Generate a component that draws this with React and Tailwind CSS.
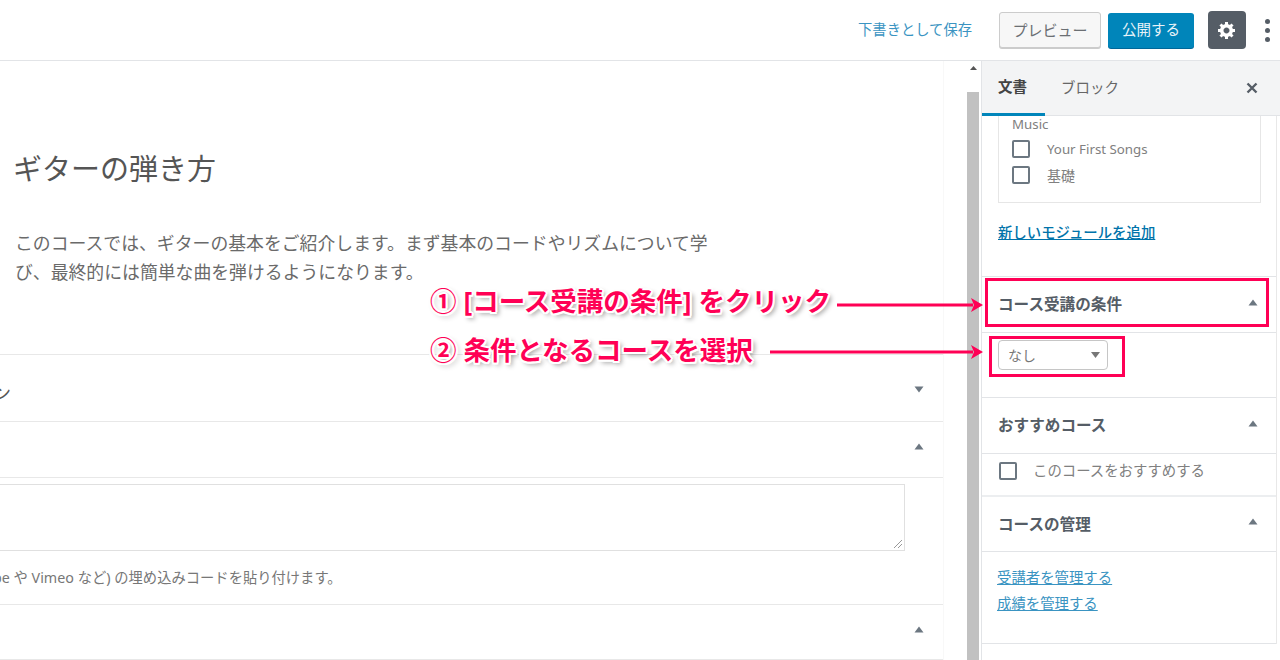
const FONT = "font-['Noto_Sans','Noto_Sans_CJK_JP',sans-serif]";

function Caret({ up = true, className = "" }) {
  return (
    <svg width="10" height="7" viewBox="0 0 10 7" className={className}>
      <polygon points={up ? "5,0.5 9.5,6.5 0.5,6.5" : "0.5,0.5 9.5,0.5 5,6.5"} fill="#6c7781" />
    </svg>
  );
}

function Check() {
  return <span className="w-[18px] h-[18px] shrink-0 border-2 border-[#6c7781] rounded-[2px] bg-white" />;
}

function Gear() {
  return (
    <svg width="20" height="20" viewBox="0 0 20 20" fill="#fff">
      <path d="M18 12h-2.18c-.17.7-.44 1.35-.81 1.93l1.54 1.54-2.1 2.1-1.54-1.54c-.58.36-1.23.63-1.91.79V19H8v-2.18c-.68-.16-1.33-.43-1.91-.79l-1.54 1.54-2.12-2.12 1.54-1.54c-.36-.58-.63-1.23-.79-1.91H1V9.03h2.17c.16-.7.44-1.35.8-1.94L2.43 5.55l2.1-2.1 1.54 1.54c.58-.37 1.24-.64 1.93-.81V2h3v2.18c.68.16 1.33.43 1.91.79l1.54-1.54 2.12 2.12-1.54 1.54c.36.59.64 1.24.8 1.94H18V12zm-8.5 1.5c1.66 0 3-1.34 3-3s-1.34-3-3-3-3 1.34-3 3 1.34 3 3 3z" />
    </svg>
  );
}

function TopBar() {
  return (
    <div className="h-[61px] shrink-0 border-b border-[#e2e4e7] flex items-center justify-end">
      <a className="text-[14.3px] text-[#3a94c2] mr-[27px]">下書きとして保存</a>
      <button className="w-[102px] h-[36px] mr-[7px] text-[15px] text-[#6b6f73] bg-[#f7f7f7] border border-[#ccc] rounded-[3px] shadow-[0_1px_0_#ccc]">
        プレビュー
      </button>
      <button className="w-[86px] h-[35px] mr-[14px] text-[14.5px] text-[#e8f3f8] bg-[#0085ba] rounded-[3px] shadow-[0_1px_0_#006799]">
        公開する
      </button>
      <button className="w-[38px] h-[38px] mr-[11px] bg-[#555d66] rounded-[4px] flex items-center justify-center">
        <Gear />
      </button>
      <div className="w-[20px] mr-[3px] flex flex-col items-center gap-[4px]">
        <span className="w-[5px] h-[5px] rounded-full bg-[#555d66]" />
        <span className="w-[5px] h-[5px] rounded-full bg-[#555d66]" />
        <span className="w-[5px] h-[5px] rounded-full bg-[#555d66]" />
      </div>
    </div>
  );
}

function Editor() {
  return (
    <div className="w-[944px] shrink-0 overflow-hidden border-r border-[#f8f8f8]">
      <div className="h-[294px] border-b border-[#e8e8e8] pt-[88px]">
        <h1 className="pl-[13px] text-[29px] leading-[40px] text-[#555]">ギターの弾き方</h1>
        <p className="mt-[40px] pl-[15px] w-[720px] text-[17.85px] leading-[29px] text-[#6a6a6a]">
          このコースでは、ギターの基本をご紹介します。まず基本のコードやリズムについて学び、最終的には簡単な曲を弾けるようになります。
        </p>
      </div>
      <div className="h-[67px] border-b border-[#e8e8e8] flex items-center justify-between pr-[19px]">
        <span className="-ml-[7px] mt-[10px] text-[18px] text-[#555]">ン</span>
        <Caret up={false} className="mt-[2px]" />
      </div>
      <div className="h-[56px] border-b border-[#e8e8e8] pb-[6px] flex items-center justify-end pr-[19px]">
        <Caret />
      </div>
      <div className="h-[127px] border-b border-[#e8e8e8] pt-[6px]">
        <div className="relative w-[905px] h-[67px] border border-l-0 border-[#e0e0e0]">
          <svg width="10" height="10" viewBox="0 0 10 10" className="absolute right-[1px] bottom-[1px]">
            <path d="M1 9 9 1M5 9 9 5" stroke="#999" strokeWidth="1" />
          </svg>
        </div>
        <p className="mt-[17px] -ml-[7px] text-[14.3px] leading-[20px] text-[#777] whitespace-nowrap">
          pe や Vimeo など) の埋め込みコードを貼り付けます。
        </p>
      </div>
      <div className="h-[55px] border-b border-[#e8e8e8] pb-[6px] flex items-center justify-end pr-[19px]">
        <Caret />
      </div>
    </div>
  );
}

function Scrollbar() {
  return (
    <div className="w-[14px] shrink-0 ml-[23px] flex flex-col">
      <div className="h-[31px] w-[12px] flex justify-center pt-[5px]">
        <svg width="7" height="4" viewBox="0 0 7 4"><polygon points="3.5,0 7,4 0,4" fill="#555" /></svg>
      </div>
      <div className="flex-1 w-[12px] bg-[#c1c1c1]" />
    </div>
  );
}

function PanelHead({ title, h = "h-[56px]" }) {
  return (
    <div className={`${h} border-b border-[#e2e4e7] pl-[16px] pr-[18px] flex items-center justify-between`}>
      <span className="text-[15.6px] font-bold text-[#555d66] pt-px">{title}</span>
      <Caret className="-mt-[5px]" />
    </div>
  );
}

function Sidebar() {
  return (
    <div className="flex-1 border-l border-[#e2e4e7] overflow-hidden flex flex-col">
      <div className="h-[55px] shrink-0 bg-[#f3f4f5] flex items-stretch relative border-b border-[#e2e4e7]">
        <div className="w-[63px] border-b-[3px] border-[#0085ba] -mb-px flex items-center pl-[16px] text-[14.5px] font-bold text-[#444]">
          文書
        </div>
        <div className="flex items-center pl-[16px] text-[14.5px] text-[#666]">ブロック</div>
        <svg width="12" height="12" viewBox="0 0 12 12" className="absolute right-[22px] top-[21px]">
          <path d="M1.5 1.5 10.5 10.5M10.5 1.5 1.5 10.5" stroke="#555d66" strokeWidth="2.4" />
        </svg>
      </div>

      <div className="border-r border-[#e8e8e8] mr-[3px]">
        <div className="h-[161px] border-b border-[#e2e4e7] px-[16px]">
          <div className="w-[263px] h-[87px] border border-t-0 border-[#e6e6e6] pl-[13px]">
            <div className="text-[13.3px] leading-[16px] text-[#808080]">Music</div>
            <div className="mt-[8px] flex items-center h-[18px] text-[13.3px] text-[#808080]">
              <Check />
              <span className="ml-[17px] pt-px">Your First Songs</span>
            </div>
            <div className="mt-[8px] flex items-center h-[18px] text-[14px] text-[#808080]">
              <Check />
              <span className="ml-[17px] pt-px">基礎</span>
            </div>
          </div>
          <a className="block mt-[20px] text-[14.4px] leading-[20px] font-medium text-[#0073aa] underline">
            新しいモジュールを追加
          </a>
        </div>

        <PanelHead title="コース受講の条件" />
        <div className="h-[65px] border-b border-[#e2e4e7] pl-[16px] pt-[7px]">
          <div className="w-[110px] h-[30px] border border-[#c6c6c6] rounded-[4px] bg-white pl-[9px] pr-[7px] flex items-center justify-between text-[14px] text-[#777]">
            なし
            <svg width="9" height="6" viewBox="0 0 9 6"><polygon points="0,0 9,0 4.5,6" fill="#777" /></svg>
          </div>
        </div>

        <PanelHead title="おすすめコース" />
        <div className="h-[43px] border-b-2 border-[#eceef0] pl-[17px] pb-[8px] flex items-center text-[14.4px] text-[#808080]">
          <Check />
          <span className="ml-[16px]">このコースをおすすめする</span>
        </div>

        <PanelHead title="コースの管理" h="h-[55px]" />
        <div className="h-[92px] border-b border-[#e2e4e7] pl-[15px] pt-[13px] text-[14.4px] leading-[26px] text-[#3a94c2]">
          <a className="block underline">受講者を管理する</a>
          <a className="block underline">成績を管理する</a>
        </div>
      </div>
    </div>
  );
}

function Arrow({ className, width }) {
  return (
    <svg width={width} height="16" viewBox={`0 0 ${width} 16`} className={`absolute ${className}`}>
      <path d={`M0 8H${width - 10}`} stroke="#ff0055" strokeWidth="3" />
      <polygon points={`${width - 12},1 ${width},8 ${width - 12},15 ${width - 9},8`} fill="#ff0055" />
    </svg>
  );
}

function Callout({ className, children }) {
  return (
    <div
      className={`absolute whitespace-nowrap text-[26.5px] leading-[34px] font-bold text-[#ff0055] [text-shadow:2px_0_#fff,-2px_0_#fff,0_2px_#fff,0_-2px_#fff,1.5px_1.5px_#fff,-1.5px_-1.5px_#fff,1.5px_-1.5px_#fff,-1.5px_1.5px_#fff,3px_3px_5px_rgba(0,0,0,0.45)] ${className}`}
    >
      {children}
    </div>
  );
}

function Annotations() {
  return (
    <>
      <Callout className="left-[430px] top-[284px]">① [コース受講の条件] をクリック</Callout>
      <Callout className="left-[430px] top-[333px]">② 条件となるコースを選択</Callout>
      <Arrow className="left-[837px] top-[297px]" width={146} />
      <Arrow className="left-[770px] top-[344px]" width={213} />
      <div className="absolute left-[985px] top-[278px] w-[284px] h-[49px] border-[3px] border-[#ff0055]" />
      <div className="absolute left-[989px] top-[336px] w-[136px] h-[41px] border-[3px] border-[#ff0055]" />
    </>
  );
}

export default function App() {
  return (
    <div className={`relative w-[1280px] h-[660px] overflow-hidden bg-white flex flex-col ${FONT}`}>
      <TopBar />
      <div className="flex-1 min-h-0 flex">
        <Editor />
        <Scrollbar />
        <Sidebar />
      </div>
      <Annotations />
    </div>
  );
}
